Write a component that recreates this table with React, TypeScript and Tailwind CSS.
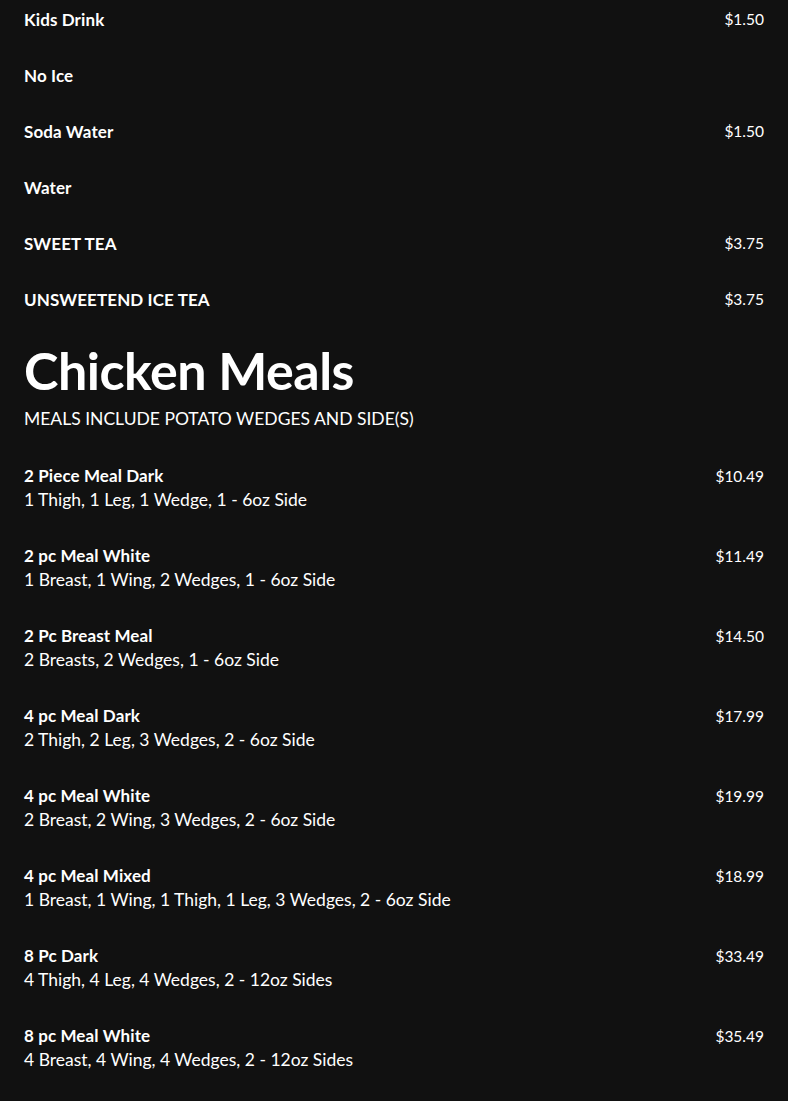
const drinks = [
  { name: 'Kids Drink', price: '$1.50' },
  { name: 'No Ice' },
  { name: 'Soda Water', price: '$1.50' },
  { name: 'Water' },
  { name: 'SWEET TEA', price: '$3.75' },
  { name: 'UNSWEETEND ICE TEA', price: '$3.75' },
];

const meals = [
  { name: '2 Piece Meal Dark', desc: '1 Thigh, 1 Leg, 1 Wedge, 1 - 6oz Side', price: '$10.49' },
  { name: '2 pc Meal White', desc: '1 Breast, 1 Wing, 2 Wedges, 1 - 6oz Side', price: '$11.49' },
  { name: '2 Pc Breast Meal', desc: '2 Breasts, 2 Wedges, 1 - 6oz Side', price: '$14.50' },
  { name: '4 pc Meal Dark', desc: '2 Thigh, 2 Leg, 3 Wedges, 2 - 6oz Side', price: '$17.99' },
  { name: '4 pc Meal White', desc: '2 Breast, 2 Wing, 3 Wedges, 2 - 6oz Side', price: '$19.99' },
  { name: '4 pc Meal Mixed', desc: '1 Breast, 1 Wing, 1 Thigh, 1 Leg, 3 Wedges, 2 - 6oz Side', price: '$18.99' },
  { name: '8 Pc Dark', desc: '4 Thigh, 4 Leg, 4 Wedges, 2 - 12oz Sides', price: '$33.49' },
  { name: '8 pc Meal White', desc: '4 Breast, 4 Wing, 4 Wedges, 2 - 12oz Sides', price: '$35.49' },
];

export default function App() {
  return (
    <div className="min-h-[1101px] bg-[#111111] text-white px-6 pt-2 pb-10 font-['Lato',sans-serif]">
      <div className="flex flex-col gap-8">
        {drinks.map((d) => (
          <div key={d.name} className="flex items-center justify-between h-6">
            <span className="text-[17px] font-bold tracking-[0.1px]">{d.name}</span>
            {d.price && <span className="text-[15.5px]">{d.price}</span>}
          </div>
        ))}
      </div>

      <h2 className="mt-[28px] text-[52px] leading-[60px] font-bold tracking-[-0.5px]">Chicken Meals</h2>
      <p className="mt-[7px] text-[17.5px] leading-6">MEALS INCLUDE POTATO WEDGES AND SIDE(S)</p>

      <div className="mt-[33px] flex flex-col gap-8">
        {meals.map((m) => (
          <div key={m.name} className="flex justify-between">
            <div className="flex flex-col">
              <span className="text-[17px] leading-6 font-bold tracking-[0.1px]">{m.name}</span>
              <span className="text-[17.5px] leading-6">{m.desc}</span>
            </div>
            <span className="text-[15.5px] leading-6">{m.price}</span>
          </div>
        ))}
      </div>
    </div>
  );
}
